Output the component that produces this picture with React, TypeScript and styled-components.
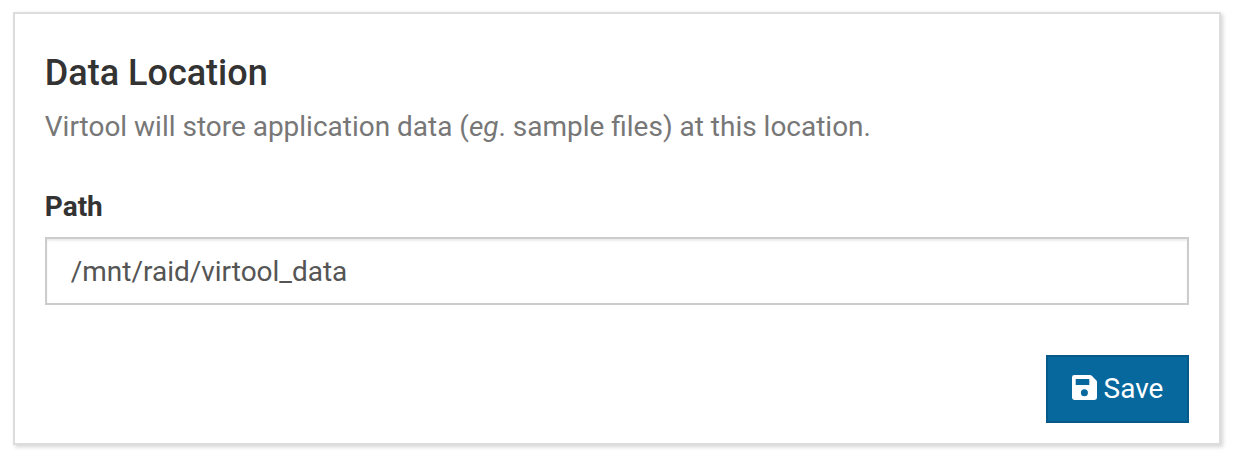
import React from "react";
import styled, { createGlobalStyle } from "styled-components";

const GlobalStyle = createGlobalStyle`
  * { box-sizing: border-box; }
  body { margin: 0; background: #fff; font-family: Roboto, "Liberation Sans", sans-serif; color: #333; font-size: 27.98px; line-height: 40px; }
`;
const Page = styled.main`
  min-height: 100vh;
  padding: 12px 15px 13px 13px;
`;
const Panel = styled.section`
  height: 433px;
  padding: 39px 30px 20px 29.8px;
  border: 2px solid #ddd;
  background: #fff;
  box-shadow: 2px 2px 4px #d5d5d5;
  display: flex;
  flex-direction: column;
`;
const Title = styled.h2`
  margin: 0;
  font-size: 36px;
  font-weight: 500;
  line-height: 40px;
`;
const Description = styled.p`
  margin: 14px 0 0;
  color: #777;
`;
const Label = styled.label`
  margin-top: 40px;
  font-weight: 700;
`;
const Input = styled.input`
  margin-top: 10px;
  height: 68px;
  padding: 0 24px;
  border: 2px solid #ccc;
  border-radius: 0;
  color: #555;
  font: inherit;
  box-shadow: inset 0 2px 2px rgba(0, 0, 0, 0.075);
`;
const SaveButton = styled.button`
  align-self: flex-end;
  margin-top: 50px;
  width: 143px;
  height: 68px;
  padding: 0 23px 0 24px;
  display: flex;
  align-items: center;
  gap: 6.6px;
  border: 2px solid #055a8a;
  background: #07689d;
  color: #fff;
  font: inherit;
`;
const Icon = styled.svg`
  width: 25px;
  height: 25px;
  margin-bottom: 3px;
  flex: none;
`;

export default function App() {
  return (
    <Page>
      <GlobalStyle />
      <Panel>
        <Title>Data Location</Title>
        <Description>
          Virtool will store application data (<em>eg</em>. sample files) at this location.
        </Description>
        <Label htmlFor="path">Path</Label>
        <Input id="path" defaultValue="/mnt/raid/virtool_data" />
        <SaveButton type="button">
          <Icon viewBox="0 0 25 25" fill="currentColor" fillRule="evenodd">
            <path d="M2.4 0H18q1 0 1.8.8l4.4 4.4q.8.8.8 1.8v15.6q0 2.4-2.4 2.4H2.4Q0 25 0 22.6V2.4Q0 0 2.4 0ZM4 4q-.3 0-.3.3V9.700q0 .3.3.3H17q.3 0 .3-.3V4.300q0-.3-.3-.3ZM12.400 14.200a3.500 3.500 0 1 0 0 7a3.500 3.500 0 1 0 0-7Z" />
          </Icon>
          Save
        </SaveButton>
      </Panel>
    </Page>
  );
}
